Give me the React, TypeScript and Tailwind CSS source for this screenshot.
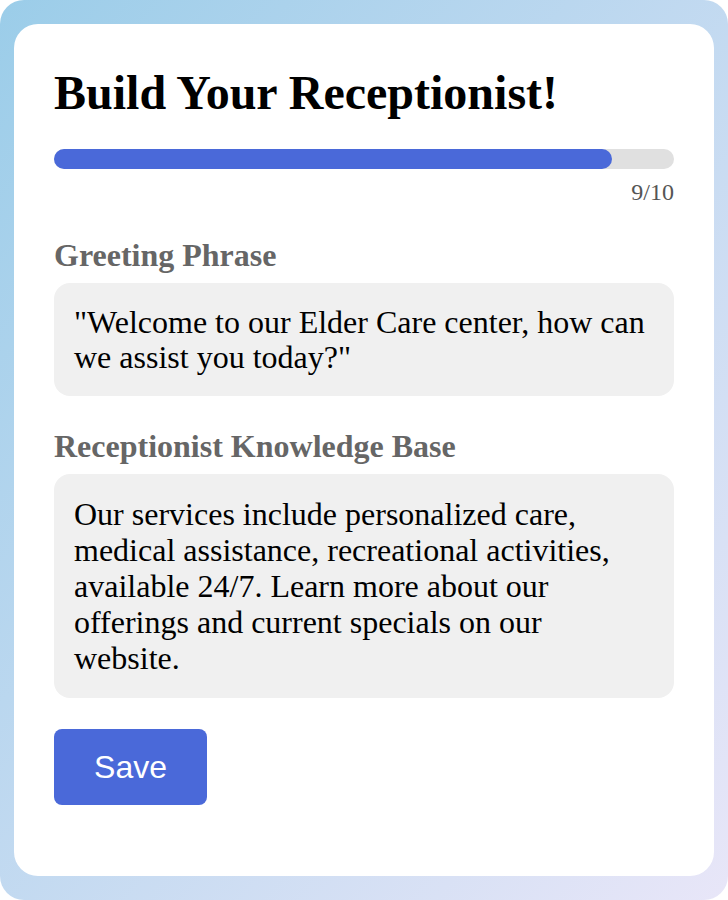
import React from 'react';

const serif = { fontFamily: '"Liberation Serif", "Times New Roman", serif' };

export default function App() {
  const step = 9;
  const total = 10;

  return (
    <div className="min-h-[900px] w-[728px] rounded-[24px] bg-gradient-to-br from-[#9bcde9] to-[#e8e6f8] px-[14px] py-[24px]" style={serif}>
      <div className="rounded-[24px] bg-white px-[40px] pt-[41px] pb-[71px]">
        <h1 className="text-[48px] font-bold leading-[56px] text-black">Build Your Receptionist!</h1>

        <div className="mt-[28px] h-[20px] w-full rounded-full bg-[#e0e0e0]">
          <div className="h-full rounded-full bg-[#4a69d9]" style={{ width: `${(step / total) * 100}%` }} />
        </div>
        <div className="mt-[9px] text-right text-[24px] leading-[28px] text-[#555]">
          {step}/{total}
        </div>

        <div className="mt-[29px] text-[32px] font-bold leading-[40px] text-[#666]">Greeting Phrase</div>
        <div className="mt-[8px] rounded-[16px] bg-[#f0f0f0] px-[20px] py-[21.5px] text-[32px] leading-[35px] text-black">
          "Welcome to our Elder Care center, how can we assist you today?"
        </div>

        <div className="mt-[30px] text-[32px] font-bold leading-[40px] text-[#666]">Receptionist Knowledge Base</div>
        <div className="mt-[8px] rounded-[16px] bg-[#f0f0f0] px-[20px] py-[22px] text-[32px] leading-[36px] text-black">
          Our services include personalized care, medical assistance, recreational activities, available 24/7. Learn more about our offerings and current specials on our website.
        </div>

        <button
          className="mt-[31px] h-[76px] w-[153px] rounded-[8px] bg-[#4a69d9] text-[32px] text-white"
          style={{ fontFamily: '"Liberation Sans", Arial, sans-serif' }}
        >
          Save
        </button>
      </div>
    </div>
  );
}
